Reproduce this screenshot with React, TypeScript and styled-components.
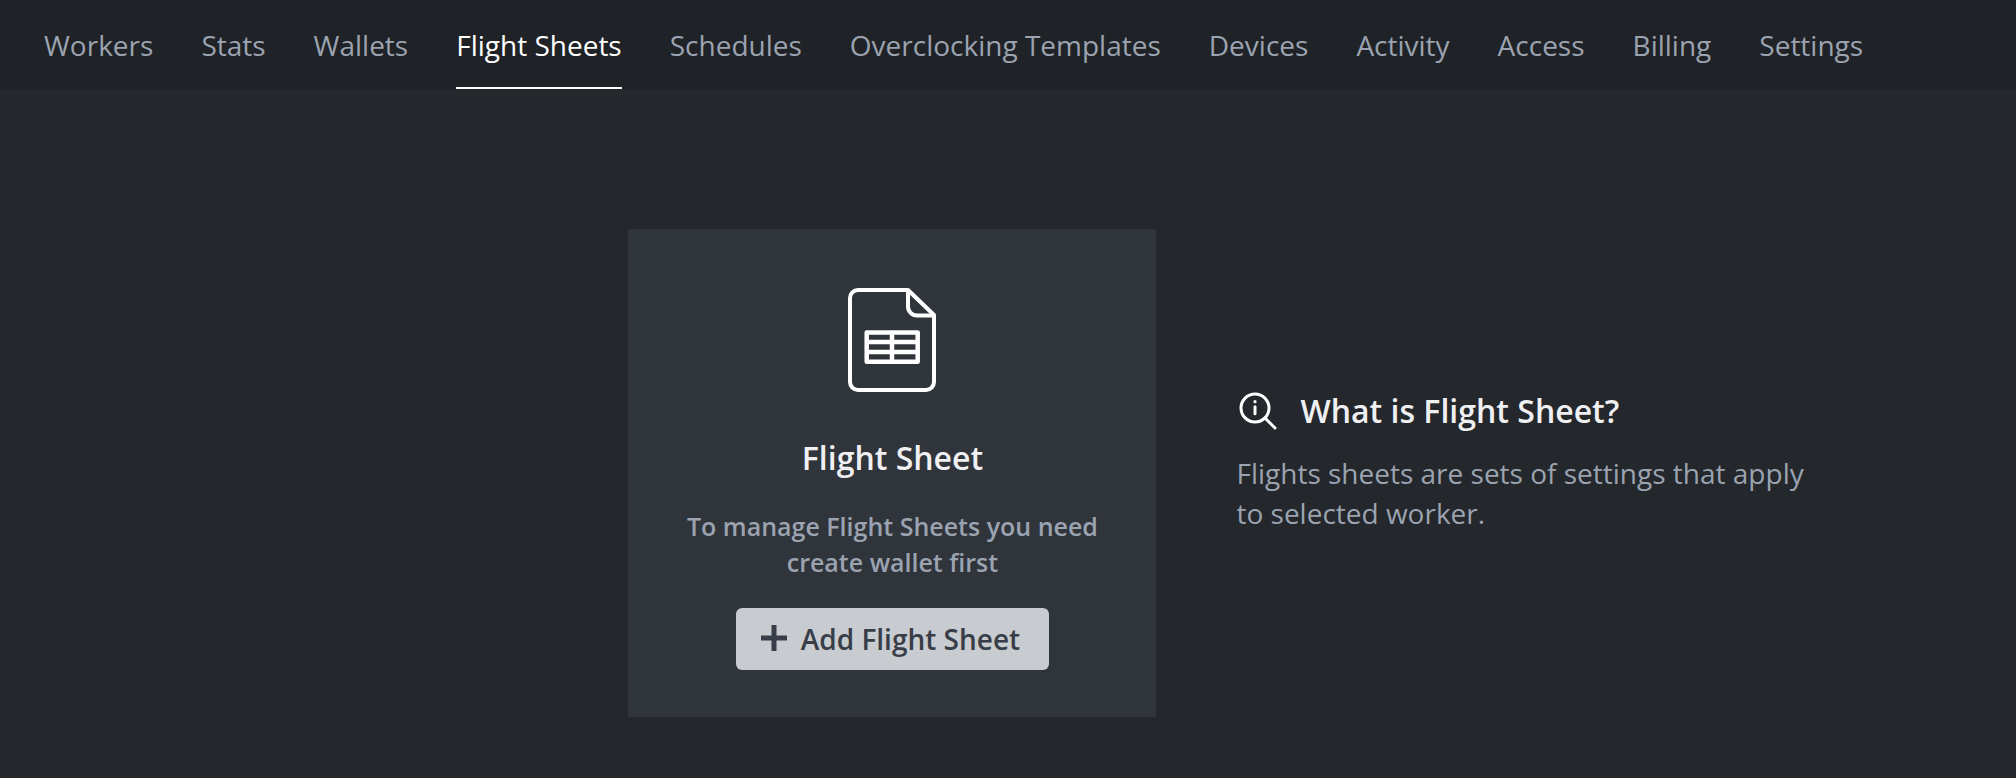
import React from 'react';
import styled, { createGlobalStyle } from 'styled-components';

const GlobalStyle = createGlobalStyle`
  *, *::before, *::after { box-sizing: border-box; }
  body {
    margin: 0;
    background: #24272b;
    color: #f0f0f3;
    font-family: "Open Sans", "Noto Sans", sans-serif;
    font-size: 28px;
    line-height: 40px;
    -webkit-font-smoothing: antialiased;
  }
  h1, h2, p, ul { margin: 0; padding: 0; }
`;

const NavBar = styled.nav`
  background: #1f2226;
  padding: 0 44px;
`;

const NavList = styled.ul`
  display: flex;
  gap: 48px;
  list-style: none;
`;

const NavLink = styled.a<{ $active: boolean }>`
  display: block;
  padding: 25px 0 22px;
  border-bottom: 2px solid ${({ $active }) => ($active ? '#ffffff' : 'transparent')};
  color: ${({ $active }) => ($active ? '#ffffff' : '#9ba3b0')};
  text-decoration: none;
  white-space: nowrap;
`;

const Content = styled.main`
  display: grid;
  grid-template-columns: 7fr 528px minmax(0, 680px) 2fr;
  align-items: center;
  padding: 140px 0 60px;
`;

const Card = styled.section`
  grid-column: 2;
  display: flex;
  flex-direction: column;
  align-items: center;
  padding: 59px 48px 47px;
  background: #30343b;
  text-align: center;
`;

const Title = styled.h2`
  font-size: 32px;
  line-height: 44px;
  font-weight: 600;
  color: #f0f0f3;
`;

const CardTitle = styled(Title)`
  margin-top: 44px;
`;

const CardText = styled.p`
  margin: 28px 0;
  font-size: 25px;
  line-height: 36px;
  font-weight: 600;
  color: #9ba3b0;
`;

const AddButton = styled.button`
  display: flex;
  align-items: center;
  gap: 14px;
  padding: 11px 29px 11px 25px;
  border: 0;
  border-radius: 6px;
  background: #c8ccd0;
  color: #383d47;
  font: inherit;
  font-weight: 600;
  white-space: nowrap;
  cursor: pointer;
`;

const Info = styled.section`
  grid-column: 3;
  padding: 0 0 25px 80px;
`;

const InfoHeading = styled.div`
  display: flex;
  align-items: center;
  gap: 20px;
  margin-bottom: 20px;
`;

const InfoText = styled.p`
  color: #9ba3b0;
`;

const SheetIcon = () => (
  <svg width="88" height="104" viewBox="0 0 88 104" fill="none" stroke="#fff" strokeWidth="4" strokeLinejoin="round" aria-hidden="true">
    <path d="M60 2H10a8 8 0 0 0-8 8v84a8 8 0 0 0 8 8h68a8 8 0 0 0 8-8V27L60 2Z" />
    <path d="M60 2v16.500a9 9 0 0 0 9 9h17" />
    <path strokeWidth="4.500" d="M18.700 44.500h51v29.300h-51zM44 44.500v29.300M18.700 54h51M18.700 64h51" />
  </svg>
);

const InfoSearchIcon = () => (
  <svg width="44" height="44" viewBox="0 0 44 44" fill="none" stroke="#fff" strokeWidth="3" strokeLinecap="round" aria-hidden="true">
    <circle cx="19" cy="19" r="14" />
    <path d="m29.500 29.500 9.500 9.500" />
    <path d="M19 17.800v6.900" />
    <circle cx="19" cy="12.700" r="1.600" fill="#fff" stroke="none" />
  </svg>
);

const PlusIcon = () => (
  <svg width="26" height="28" viewBox="0 0 26 28" stroke="currentColor" strokeWidth="5" aria-hidden="true">
    <path d="M13 0v26M0 13h26" />
  </svg>
);

const sections = [
  'Workers',
  'Stats',
  'Wallets',
  'Flight Sheets',
  'Schedules',
  'Overclocking Templates',
  'Devices',
  'Activity',
  'Access',
  'Billing',
  'Settings',
];

export default function App() {
  return (
    <>
      <GlobalStyle />
      <NavBar>
        <NavList>
          {sections.map((name) => {
            const active = name === 'Flight Sheets';
            return (
              <li key={name}>
                <NavLink href="#" $active={active} aria-current={active ? 'page' : undefined}>
                  {name}
                </NavLink>
              </li>
            );
          })}
        </NavList>
      </NavBar>
      <Content>
        <Card>
          <SheetIcon />
          <CardTitle>Flight Sheet</CardTitle>
          <CardText>To manage Flight Sheets you need create wallet first</CardText>
          <AddButton type="button">
            <PlusIcon />
            Add Flight Sheet
          </AddButton>
        </Card>
        <Info>
          <InfoHeading>
            <InfoSearchIcon />
            <Title>What is Flight Sheet?</Title>
          </InfoHeading>
          <InfoText>Flights sheets are sets of settings that apply to selected worker.</InfoText>
        </Info>
      </Content>
    </>
  );
}
